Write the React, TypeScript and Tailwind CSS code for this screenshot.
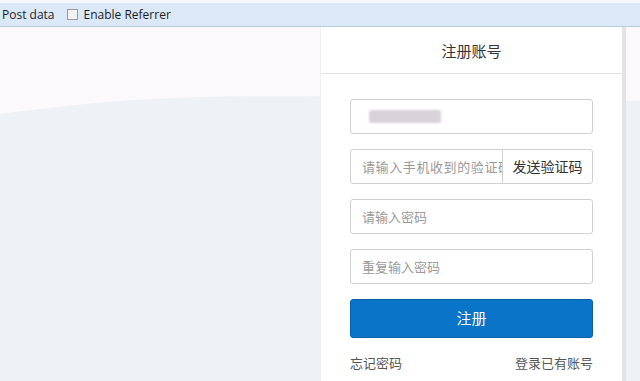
import React from "react";

export default function App() {
  const cjk = { fontFamily: '"Noto Sans CJK SC", "Noto Sans", sans-serif' };
  return (
    <div className="w-[640px] h-[381px] overflow-hidden bg-[#fcf9fc] relative flex flex-col">
      <div className="h-[3px] bg-[#f4f7fb]" />
      <div
        className="h-[24px] bg-[#dae8f8] border-b border-[#b9cddf] flex items-center text-[12px] text-[#1e1e1e] pl-[2px]"
        style={{ fontFamily: '"Open Sans", "Noto Sans", sans-serif' }}
      >
        <span>Post data</span>
        <span className="ml-[12px] w-[11px] h-[11px] border border-[#9a9a9a] bg-[#f2f2f2] inline-block" />
        <span className="ml-[6px]">Enable Referrer</span>
      </div>
      <div className="relative flex-1">
        <svg className="absolute inset-0" width="640" height="354" viewBox="0 0 640 354">
          <path
            d="M0 87 C 60 79, 120 72, 200 70 C 280 68, 400 70, 640 74 L640 354 L0 354 Z"
            fill="#eef2f6"
          />
          <rect x="622" y="0" width="4" height="354" fill="#e3e3e6" />
        </svg>
        <div className="relative pl-[320px] h-full" style={cjk}>
          <div className="w-[302px] h-full bg-white flex flex-col border-l border-[#f0f0f2]">
            <div className="h-[47px] flex items-center justify-center text-[15px] text-[#333] border-b border-[#e2e2e6] pt-[2px]">
              注册账号
            </div>
            <div className="px-[29px] pt-[25px] flex flex-col">
              <div className="h-[35px] border border-[#cfcfd4] rounded-[3px] flex items-center pl-[18px]">
                <div className="w-[72px] h-[13px] bg-[#d8d3d9] rounded-[2px] blur-[1px]" />
              </div>
              <div className="mt-[15px] h-[35px] border border-[#cfcfd4] rounded-[3px] flex">
                <div className="w-[152px] overflow-hidden whitespace-nowrap flex items-center pl-[11px] text-[13px] tracking-[0.6px] text-[#9a9a9a] border-r border-[#cfcfd4]">
                  请输入手机收到的验证码
                </div>
                <div className="flex-1 flex items-center justify-center text-[14px] text-[#333]">
                  发送验证码
                </div>
              </div>
              <div className="mt-[15px] h-[35px] border border-[#cfcfd4] rounded-[3px] flex items-center pl-[11px] text-[13px] text-[#9a9a9a]">
                请输入密码
              </div>
              <div className="mt-[15px] h-[35px] border border-[#cfcfd4] rounded-[3px] flex items-center pl-[11px] text-[13px] text-[#9a9a9a]">
                重复输入密码
              </div>
              <div className="mt-[15px] h-[39px] bg-[#0a74c8] rounded-[3px] border border-[#0a5fa8] flex items-center justify-center text-[15px] text-white">
                注册
              </div>
              <div className="mt-[15px] flex justify-between text-[13px] text-[#555]">
                <span>忘记密码</span>
                <span>登录已有账号</span>
              </div>
            </div>
          </div>
        </div>
      </div>
    </div>
  );
}
